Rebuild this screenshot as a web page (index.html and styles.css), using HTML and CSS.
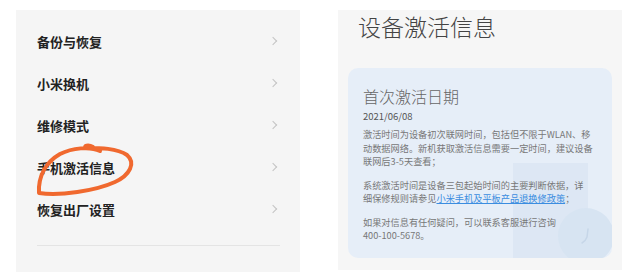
FILE: index.html
```html
<!DOCTYPE html>
<html lang="zh-CN">
<head>
    <meta charset="UTF-8">
    <meta name="viewport" content="width=device-width, initial-scale=1.0">
    <title>设备激活信息</title>
    <link rel="stylesheet" href="styles.css">
</head>
<body>
    <div class="page">
        <div class="settings">
            <ul class="menu">
                <li class="menu-item"><span>备份与恢复</span><i class="chevron"></i></li>
                <li class="menu-item"><span>小米换机</span><i class="chevron"></i></li>
                <li class="menu-item"><span>维修模式</span><i class="chevron"></i></li>
                <li class="menu-item"><span>手机激活信息</span><i class="chevron"></i></li>
                <li class="menu-item"><span>恢复出厂设置</span><i class="chevron"></i></li>
            </ul>
            <div class="divider"></div>
            <!-- hand drawn mark over the row -->
            <svg class="scribble" width="284" height="262" viewBox="16 10 284 262">
                <path d="M100 151 C90 146, 72 148, 60 154 C46 162, 38 176, 39 193 C60 196, 95 191, 115 182 C130 175, 136 163, 127 155 C117 148, 100 148, 86 148 C83 146, 88 144, 93 147"
                      fill="none" stroke="#f0692f" stroke-width="4" stroke-linecap="round" stroke-linejoin="round"/>
            </svg>
        </div>

        <div class="info">
            <h1 class="info-title">设备激活信息</h1>
            <div class="card">
                <div class="card-deco"></div>
                <div class="card-circle">
                    <svg width="16" height="20" viewBox="0 0 16 20"><path d="M10 3 L9 11 C8 14, 6 16, 4 17" fill="none" stroke="#c6d6e8" stroke-width="1.5" stroke-linecap="round"/></svg>
                </div>
                <div class="card-body">
                    <h2 class="card-title">首次激活日期</h2>
                    <div class="card-date">2021/06/08</div>
                    <p>激活时间为设备初次联网时间，包括但不限于WLAN、移<br>动数据网络。新机获取激活信息需要一定时间，建议设备<br>联网后3-5天查看；</p>
                    <p>系统激活时间是设备三包起始时间的主要判断依据，详<br>细保修规则请参见<a href="#">小米手机及平板产品退换修政策</a>；</p>
                    <p>如果对信息有任何疑问，可以联系客服进行咨询<br>400-100-5678。</p>
                </div>
            </div>
        </div>
    </div>
</body>
</html>
```

FILE: styles.css
```css
* {
    box-sizing: border-box;
    margin: 0;
    padding: 0;
}
body {
    background: #fff;
    font-family: "Noto Sans CJK SC", "Noto Sans", sans-serif;
}
.page {
    display: flex;
    gap: 38px;
    padding: 10px 0 0 16px;
}

/* left: settings list */
.settings {
    position: relative;
    width: 284px;
    height: 262px;
    background: #f5f5f5;
    padding: 10px 20px 0 21px;
}
.menu {
    list-style: none;
}
.menu-item {
    height: 42px;
    display: flex;
    align-items: center;
    justify-content: space-between;
    font-size: 13px;
    font-weight: 700;
    color: #222;
}
.chevron {
    width: 6px;
    height: 6px;
    border-top: 1.2px solid #c4c4c4;
    border-right: 1.2px solid #c4c4c4;
    transform: rotate(45deg);
    margin-right: 4px;
}
.divider {
    margin-top: 15px;
    height: 1px;
    background: #e4e4e4;
}
.scribble {
    position: absolute;
    left: 0;
    top: 0;
}

/* right: activation info */
.info {
    width: 284px;
    height: 260px;
    background: #f6f6f6;
    padding: 0 10px;
}
.info-title {
    font-size: 23px;
    font-weight: 300;
    line-height: 32px;
    color: #444;
    padding-left: 10px;
    margin-bottom: 26px;
}
.card {
    position: relative;
    overflow: hidden;
    height: 190px;
    background: #e6eef8;
    border-radius: 10px;
    padding: 18px 0 0 15px;
}
.card-deco {
    position: absolute;
    left: 165px;
    top: 95px;
    width: 75px;
    height: 100px;
    background: #dde7f4;
}
.card-circle {
    position: absolute;
    left: 210px;
    top: 140px;
    width: 56px;
    height: 56px;
    border-radius: 50%;
    background: #d7e4f2;
    display: flex;
    align-items: center;
    justify-content: center;
}
.card-body {
    position: relative;
    white-space: nowrap;
}
.card-title {
    font-size: 16px;
    font-weight: 300;
    line-height: 20px;
    color: #666;
}
.card-date {
    font-size: 9.5px;
    line-height: 14px;
    color: #555;
    margin: 3px 0 5px;
}
.card-body p {
    font-size: 9.2px;
    line-height: 13.5px;
    color: #777;
    margin-bottom: 10px;
}
.card-body a {
    color: #3b8de0;
    text-decoration: underline;
}
```
